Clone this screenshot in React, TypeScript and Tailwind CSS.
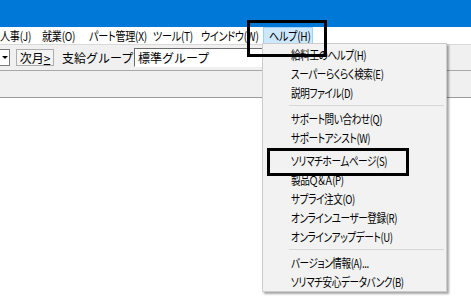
import React from "react";

const menuBar = [
  { label: "人事(J)", w: "w-[42px]" },
  { label: "就業(O)", w: "w-[47px]" },
  { label: "パート管理(X)", w: "w-[64px]" },
  { label: "ツール(T)", w: "w-[48px]" },
  { label: "ウインドウ(W)", w: "w-[62px]" },
];

type Entry = { label: string; gap?: boolean } | "sep";

const helpItems: Entry[] = [
  { label: "給料王のヘルプ(H)" },
  { label: "スーパーらくらく検索(E)" },
  { label: "説明ファイル(D)" },
  "sep",
  { label: "サポート問い合わせ(Q)" },
  { label: "サポートアシスト(W)" },
  { label: "ソリマチホームページ(S)", gap: true },
  { label: "製品Ｑ＆Ａ(P)" },
  { label: "サプライ注文(O)" },
  { label: "オンラインユーザー登録(R)" },
  { label: "オンラインアップデート(U)" },
  "sep",
  { label: "バージョン情報(A)..." },
  { label: "ソリマチ安心データバンク(B)" },
];

function HelpMenu() {
  return (
    <div className="absolute left-[262px] top-[43px] w-[185px] pt-[1px] bg-[#f2f2f2] border border-[#cccccc] shadow-[2px_2px_2px_rgba(0,0,0,0.35)] [font-feature-settings:'palt']">
      {helpItems.map((it, i) =>
        it === "sep" ? (
          <div key={i} className="h-[7px] flex items-center pl-[26px] pr-[2px]">
            <div className="h-px w-full bg-[#d7d7d7]" />
          </div>
        ) : (
          <div
            key={i}
            className={`h-[19px] flex items-center pl-[28px] text-[12px] text-black whitespace-nowrap ${it.gap ? "mt-[4px]" : ""}`}
          >
            <span className="inline-block origin-left scale-x-[0.8] tracking-[-0.5px]">{it.label}</span>
          </div>
        )
      )}
    </div>
  );
}

export default function App() {
  return (
    <div className="relative w-[471px] h-[306px] overflow-hidden bg-white [font-family:'Noto_Sans_CJK_JP',sans-serif]">
      {/* title bar */}
      <div className="h-[27px] bg-[#0078d7]" />

      {/* menu bar */}
      <div className="h-[17px] bg-white flex items-stretch text-[12px] text-black [font-feature-settings:'palt']">
        {menuBar.map((m) => (
          <div key={m.label} className={`${m.w} flex items-center whitespace-nowrap`}>
            <span className="inline-block origin-left scale-x-[0.84] tracking-[-0.3px]">{m.label}</span>
          </div>
        ))}
        <div className="w-[50px] flex items-center pl-[5px] bg-[#cce8ff] border border-[#99d1ff] whitespace-nowrap">
          <span className="inline-block origin-left scale-x-[0.84] tracking-[-0.3px]">ヘルプ(H)</span>
        </div>
      </div>

      {/* toolbar */}
      <div className="h-[26px] bg-[#f0f0f0] border-t border-[#d9d9d9] flex items-center text-[12px] text-black">
        <div className="w-[10px] h-[17px] bg-white border border-[#7a7a7a] border-l-0 flex items-center justify-center">
          <span className="block w-0 h-0 border-l-[3px] border-r-[3px] border-t-[3px] border-l-transparent border-r-transparent border-t-black" />
        </div>
        <div className="ml-[6px] w-[38px] h-[17px] border border-[#adadad] bg-[#f4f4f4] flex items-center justify-center leading-none">
          次月<span className="underline">&gt;</span>
        </div>
        <div className="ml-[8px] w-[72px] whitespace-nowrap">支給グループ</div>
        <div className="w-[140px] h-[19px] bg-white border-t border-l border-[#6d6d6d] border-b border-b-white flex items-center pl-[3px] whitespace-nowrap">
          標準グループ
        </div>
      </div>

      {/* sub band */}
      <div className="h-[28px] bg-[#f0f0f0] border-t border-[#a8a8a8] border-b border-b-[#9a9a9a]" />

      <HelpMenu />

      {/* annotation boxes */}
      <div className="absolute left-[247px] top-[20px] w-[80px] h-[37px] border-[3px] border-black" />
      <div className="absolute left-[267px] top-[148px] w-[142px] h-[28px] border-[3px] border-black" />
    </div>
  );
}
